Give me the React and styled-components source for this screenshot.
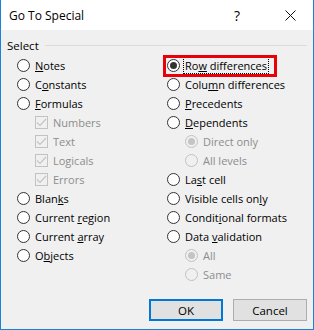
import styled, { createGlobalStyle } from 'styled-components';

const GlobalStyle = createGlobalStyle`
  html, body { margin: 0; padding: 0; background: #fff; }
  * { box-sizing: border-box; }
`;

const leftItems = [
  { type: 'radio', label: 'Notes', key: 0 },
  { type: 'radio', label: 'Constants', key: 1 },
  { type: 'radio', label: 'Formulas', key: 0 },
  { type: 'check', label: 'Numbers', sub: true },
  { type: 'check', label: 'Text', sub: true },
  { type: 'check', label: 'Logicals', sub: true },
  { type: 'check', label: 'Errors', sub: true },
  { type: 'radio', label: 'Blanks', key: 4 },
  { type: 'radio', label: 'Current region', key: 8 },
  { type: 'radio', label: 'Current array', key: 8 },
  { type: 'radio', label: 'Objects', key: 1 },
];

const rightItems = [
  { type: 'radio', label: 'Row differences', key: 2, checked: true, focus: true },
  { type: 'radio', label: 'Column differences', key: 4 },
  { type: 'radio', label: 'Precedents', key: 0 },
  { type: 'radio', label: 'Dependents', key: 0 },
  { type: 'radio', label: 'Direct only', sub: true, checked: true },
  { type: 'radio', label: 'All levels', sub: true },
  { type: 'radio', label: 'Last cell', key: 2 },
  { type: 'radio', label: 'Visible cells only', key: 16 },
  { type: 'radio', label: 'Conditional formats', key: 6 },
  { type: 'radio', label: 'Data validation', key: 5 },
  { type: 'radio', label: 'All', sub: true, checked: true },
  { type: 'radio', label: 'Same', sub: true },
];

const Label = ({ text, k }) => {
  if (k === undefined) return text;
  return (
    <>
      {text.slice(0, k)}
      <u>{text[k]}</u>
      {text.slice(k + 1)}
    </>
  );
};

const Option = ({ item }) => (
  <Row $sub={item.sub}>
    {item.type === 'radio' ? (
      <Radio $disabled={item.sub}>{item.checked && <Dot $disabled={item.sub} />}</Radio>
    ) : (
      <Check>
        <svg width='11' height='11' viewBox='0 0 11 11'>
          <path d='M1 5.5 L4 8.5 L10 2' fill='none' stroke='#c4c4c4' strokeWidth='1.2' />
        </svg>
      </Check>
    )}
    <Text $disabled={item.sub} $focus={item.focus}>
      <Label text={item.label} k={item.key} />
    </Text>
    {item.focus && <Highlight />}
  </Row>
);

const App = () => (
  <>
    <GlobalStyle />
    <Window>
      <TitleBar>
        <Title>Go To Special</Title>
        <Help>?</Help>
        <Close>
          <svg width='11' height='11' viewBox='0 0 11 11'>
            <path d='M0.5 0.5 L10.5 10.5 M10.5 0.5 L0.5 10.5' stroke='#111' strokeWidth='1' />
          </svg>
        </Close>
      </TitleBar>
      <Body>
        <Legend>
          <span>Select</span>
          <Line />
        </Legend>
        <Columns>
          <Column>
            {leftItems.map((it) => (
              <Option key={it.label} item={it} />
            ))}
          </Column>
          <Column>
            {rightItems.map((it) => (
              <Option key={it.label + (it.sub ? 's' : '')} item={it} />
            ))}
          </Column>
        </Columns>
        <Buttons>
          <Button $primary>OK</Button>
          <Button>Cancel</Button>
        </Buttons>
      </Body>
    </Window>
  </>
);

const Window = styled.div`
  width: 314px;
  height: 330px;
  display: flex;
  flex-direction: column;
  border: 1px solid #1883d7;
  border-top: none;
  font-family: 'Open Sans', 'Noto Sans', sans-serif;
  font-size: 11px;
  color: #000;
`;

const TitleBar = styled.div`
  height: 30px;
  background: #fff;
  display: flex;
  align-items: center;
  padding-left: 8px;
`;

const Title = styled.div`
  flex: 1;
  font-size: 12px;
`;

const Help = styled.div`
  width: 30px;
  font-size: 14px;
  text-align: center;
  margin-right: 15px;
`;

const Close = styled.div`
  width: 46px;
  display: flex;
  justify-content: center;
`;

const Body = styled.div`
  flex: 1;
  background: #f0f0f0;
  display: flex;
  flex-direction: column;
  padding: 7px 6px 8px 6px;
`;

const Legend = styled.div`
  display: flex;
  align-items: center;
  gap: 6px;
  height: 16px;
  font-size: 11.5px;
`;

const Line = styled.div`
  flex: 1;
  height: 1px;
  background: #dcdcdc;
`;

const Columns = styled.div`
  display: grid;
  grid-template-columns: 150px 1fr;
  padding-left: 10px;
  margin-top: 3px;
`;

const Column = styled.div`
  display: flex;
  flex-direction: column;
`;

const Row = styled.div`
  position: relative;
  height: 19px;
  display: flex;
  align-items: center;
  gap: 5px;
  padding-left: ${({ $sub }) => ($sub ? '18px' : '0')};
`;

const Radio = styled.span`
  width: 13px;
  height: 13px;
  border-radius: 50%;
  border: 1px solid ${({ $disabled }) => ($disabled ? '#c2c2c2' : '#333')};
  background: ${({ $disabled }) => ($disabled ? '#f0f0f0' : '#fff')};
  display: flex;
  align-items: center;
  justify-content: center;
  flex-shrink: 0;
`;

const Dot = styled.span`
  width: 7px;
  height: 7px;
  border-radius: 50%;
  background: ${({ $disabled }) => ($disabled ? '#c4c4c4' : '#333')};
`;

const Check = styled.span`
  width: 13px;
  height: 13px;
  border: 1px solid #c2c2c2;
  background: #f0f0f0;
  display: flex;
  align-items: center;
  justify-content: center;
  flex-shrink: 0;
`;

const Text = styled.span`
  color: ${({ $disabled }) => ($disabled ? '#8d8d8d' : '#000')};
  white-space: nowrap;
  line-height: 15px;
  outline: ${({ $focus }) => ($focus ? '1px dotted #000' : 'none')};
  outline-offset: 0;
  padding: 0 1px;
  margin-left: -1px;
`;

const Highlight = styled.span`
  position: absolute;
  left: -4px;
  top: -1px;
  width: 114px;
  height: 22px;
  border: 3px solid #e8000b;
  pointer-events: none;
`;

const Buttons = styled.div`
  margin-top: auto;
  display: flex;
  justify-content: flex-end;
  gap: 10px;
`;

const Button = styled.button`
  width: 74px;
  height: 22px;
  font-family: inherit;
  font-size: 11.5px;
  background: #e1e1e1;
  border: ${({ $primary }) => ($primary ? '2px solid #0078d7' : '1px solid #adadad')};
  color: #000;
  padding: 0;
`;

export default App;
